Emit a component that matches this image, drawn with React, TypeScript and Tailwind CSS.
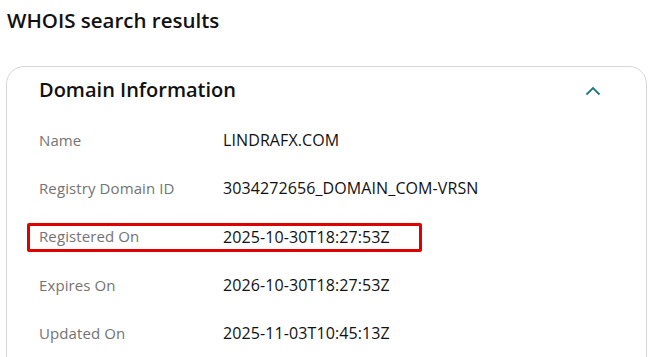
import React from 'react';

const rows = [
    { label: 'Name', value: 'LINDRAFX.COM' },
    { label: 'Registry Domain ID', value: '3034272656_DOMAIN_COM-VRSN' },
    { label: 'Registered On', value: '2025-10-30T18:27:53Z', highlight: true },
    { label: 'Expires On', value: '2026-10-30T18:27:53Z' },
    { label: 'Updated On', value: '2025-11-03T10:45:13Z' },
];

export default function App() {
    return (
        <div className="w-[648px] h-[357px] overflow-hidden bg-white font-['Open_Sans',sans-serif]">
            <h1 className="pl-[7px] pt-[6px] text-[20.5px] leading-[28px] font-semibold text-[#111111]">
                WHOIS search results
            </h1>

            <div className="mt-[32px] ml-[6px] w-[641px] h-[320px] border border-[#d6d6d6] rounded-[18px] px-[32px]">
                <div className="flex items-center justify-between h-[46px]">
                    <h2 className="text-[20px] font-semibold text-[#111111]">Domain Information</h2>
                    <svg className="mr-[13px] mt-[1px]" width="16" height="10" viewBox="0 0 16 10" fill="none">
                        <path d="M1.5 8.5L8 2L14.5 8.5" stroke="#1b7a80" strokeWidth="1.8" />
                    </svg>
                </div>

                <div className="mt-[3px]">
                    {rows.map((row) => (
                        <div key={row.label} className="relative flex items-center h-[48.25px] text-[15px]">
                            <span className="w-[184px] text-[#737373] tracking-[0.1px]">{row.label}</span>
                            <span className="text-[16px] text-[#111111] tracking-[0.1px]">{row.value}</span>
                            {row.highlight && (
                                <div className="absolute left-[-12px] top-[10px] w-[395px] h-[29px] border-[3px] border-[#e00000] rounded-[2px]" />
                            )}
                        </div>
                    ))}
                </div>
            </div>
        </div>
    );
}
